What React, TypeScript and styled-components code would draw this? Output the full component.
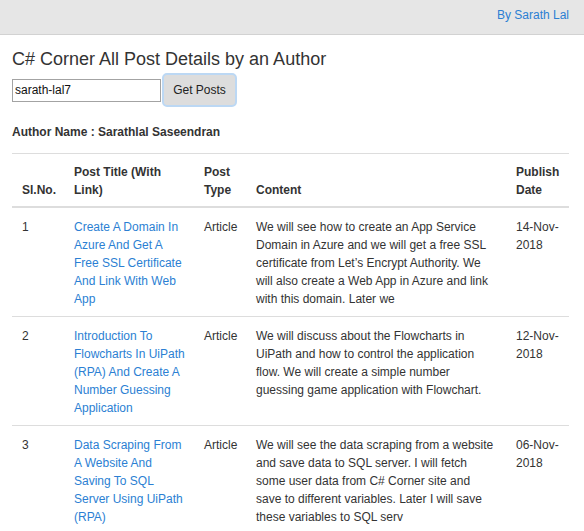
import { useState } from "react";
import styled, { createGlobalStyle } from "styled-components";

interface Post {
    id: number,
    title: string,
    type: string,
    content: string,
    date: string
}

const posts: Post[] = [
    {
        id: 1,
        title: "Create A Domain In Azure And Get A Free SSL Certificate And Link With Web App",
        type: "Article",
        content: "We will see how to create an App Service Domain in Azure and we will get a free SSL certificate from Let’s Encrypt Authority. We will also create a Web App in Azure and link with this domain. Later we",
        date: "14-Nov-2018"
    },
    {
        id: 2,
        title: "Introduction To Flowcharts In UiPath (RPA) And Create A Number Guessing Application",
        type: "Article",
        content: "We will discuss about the Flowcharts in UiPath and how to control the application flow. We will create a simple number guessing game application with Flowchart.",
        date: "12-Nov-2018"
    },
    {
        id: 3,
        title: "Data Scraping From A Website And Saving To SQL Server Using UiPath (RPA)",
        type: "Article",
        content: "We will see the data scraping from a website and save data to SQL server. I will fetch some user data from C# Corner site and save to different variables. Later I will save these variables to SQL serv",
        date: "06-Nov-2018"
    }
]

const columns = [
    { label: "Sl.No.", width: 52 },
    { label: "Post Title (With Link)", width: 130 },
    { label: "Post Type", width: 52 },
    { label: "Content", width: 260 },
    { label: "Publish Date", width: 63 }
]

export default function App() {
    const [author, setAuthor] = useState("sarath-lal7")

    return (
        <>
            <GlobalStyle />
            <NavBar>
                <NavLink href="#">By Sarath Lal</NavLink>
            </NavBar>
            <Main>
                <Title>C# Corner All Post Details by an Author</Title>
                <SearchRow>
                    <AuthorInput type="text" value={author} onChange={event => setAuthor(event.target.value)} />
                    <GetButton>Get Posts</GetButton>
                </SearchRow>
                <AuthorName>Author Name : Sarathlal Saseendran</AuthorName>
                <PostTable>
                    <colgroup>
                        {columns.map((col, index) => (
                            <col key={index} style={{ width: col.width }} />
                        ))}
                    </colgroup>
                    <thead>
                        <tr>
                            {columns.map((col, index) => (
                                <HeadCell key={index}>{col.label}</HeadCell>
                            ))}
                        </tr>
                    </thead>
                    <tbody>
                        {posts.map(post => (
                            <tr key={post.id}>
                                <Cell>{post.id}</Cell>
                                <Cell><PostLink href="#">{post.title}</PostLink></Cell>
                                <Cell>{post.type}</Cell>
                                <Cell>{post.content}</Cell>
                                <Cell>{post.date}</Cell>
                            </tr>
                        ))}
                    </tbody>
                </PostTable>
            </Main>
        </>
    )
}

const GlobalStyle = createGlobalStyle`
    body {
        margin: 0;
        background: #fff;
        font-family: "Liberation Sans", Arial, sans-serif;
        font-size: 12px;
        line-height: 18px;
        color: #333;
    }
`

const NavBar = styled.div`
    display: flex;
    justify-content: flex-end;
    align-items: flex-start;
    height: 35px;
    box-sizing: border-box;
    padding: 6px 15px 0 0;
    background-color: #e6e6e6;
    border-bottom: 1px solid #d2d2d2;
`

const NavLink = styled.a`
    color: #2b7fd3;
    text-decoration: none;
    font-size: 12px;
`

const Main = styled.div`
    padding: 0 15px 0 12px;
`

const Title = styled.h2`
    margin: 13px 0 3px;
    font-size: 18px;
    line-height: 22px;
    font-weight: normal;
    color: #333;
`

const SearchRow = styled.div`
    display: flex;
    flex-direction: row;
    align-items: center;
`

const AuthorInput = styled.input`
    width: 149px;
    height: 23px;
    box-sizing: border-box;
    border: 1px solid #a3a3a3;
    padding: 0 2px;
    font-family: "Liberation Sans", Arial, sans-serif;
    font-size: 12px;
    color: #111;
    outline: none;
`

const GetButton = styled.button`
    width: 75px;
    height: 34px;
    margin-left: 1px;
    box-sizing: border-box;
    border: 2px solid #bcd8f4;
    border-radius: 5px;
    background-color: #dddddd;
    font-family: "Liberation Sans", Arial, sans-serif;
    font-size: 12px;
    color: #222;
    cursor: pointer;
`

const AuthorName = styled.div`
    margin: 16px 0 12px;
    font-weight: bold;
`

const PostTable = styled.table`
    width: 557px;
    table-layout: fixed;
    border-collapse: collapse;
    border-spacing: 0;
`

const HeadCell = styled.th`
    text-align: left;
    vertical-align: bottom;
    padding: 9px 8px 7px 10px;
    border-top: 1px solid #dddddd;
    border-bottom: 2px solid #dddddd;
    font-weight: bold;
`

const Cell = styled.td`
    vertical-align: top;
    padding: 10px 8px 8px 10px;
    border-top: 1px solid #dddddd;
`

const PostLink = styled.a`
    color: #2b7fd3;
    text-decoration: none;
`
